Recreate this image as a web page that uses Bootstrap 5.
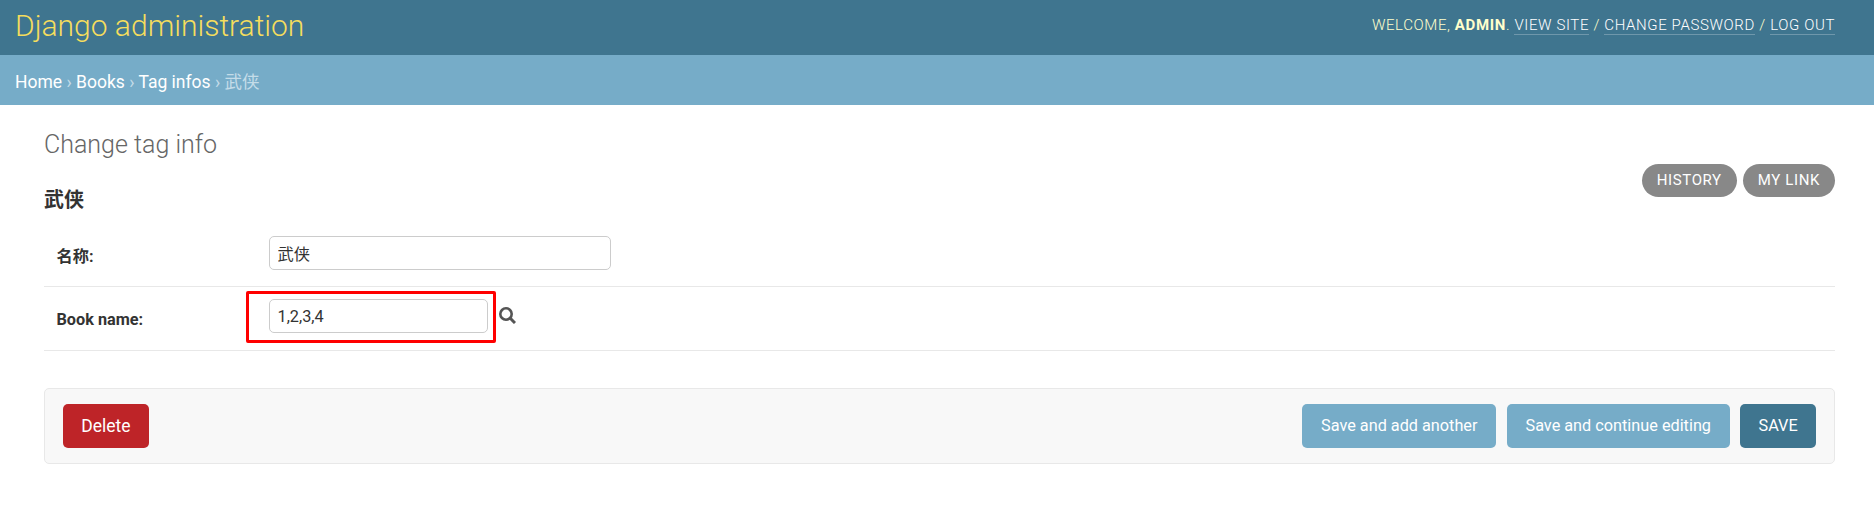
<!DOCTYPE html>
<html lang="en">
<head>
<meta charset="utf-8">
<title>Change tag info | Django site admin</title>
<link href="https://cdn.jsdelivr.net/npm/bootstrap@5.3.0/dist/css/bootstrap.min.css" rel="stylesheet">
<style>
body{font-family:Roboto,"Noto Sans CJK SC",sans-serif;font-size:16.25px;line-height:20px;color:#333;background:#fff}
.site-head{height:55px;background:#3f758f;color:#ffc;padding:0 39px 0 15px}
.site-head h1{font-size:30px;font-weight:300;line-height:36px;color:#f5dd5d;margin:8px 0 0}
.user-tools{font-size:15px;font-weight:300;letter-spacing:.625px;line-height:18px;margin-top:16px;text-transform:uppercase}
.user-tools strong{font-weight:700}
.user-tools a{color:#fff;text-decoration:none;border-bottom:1px solid rgba(255,255,255,.25)}
.crumbs{height:50px;background:#76acc8;color:#c4dce8;font-size:17.5px;padding:3px 15px 0}
.crumbs a{color:#fff;text-decoration:none}
.page-body{padding:25px 39px 0 44px}
.page-body h1{font-size:25px;font-weight:300;line-height:30px;color:#666;margin:0}
.title-row{height:82px}
.page-body h2{font-size:20px;font-weight:700;line-height:24px;margin:28px 0 0}
.tools{margin-top:34px;gap:6px}
.pill{background:#888;color:#fff;border-radius:18.75px;height:33px;font-size:15px;line-height:18px;padding:7px 15px 8px;letter-spacing:.625px;text-decoration:none;text-transform:uppercase}
.field-row{border-bottom:1px solid #e8e8e8;padding:12px 12.5px 17px}
.field-row.first-row{padding:24px 12.5px 16px}
.field-row label{width:212.5px;font-weight:700;padding-top:10.5px}
.admin-input{border:1px solid #ccc;border-radius:5px;height:34px;width:342px;padding:6px 7.5px;font-size:16.25px;color:#333;line-height:20px;background:#fff}
.raw-id{width:219px}
.lookup{margin:8px 0 0 11px}
.marker{left:-23.5px;top:-8px;width:250px;height:52px;border:3px solid #f00;border-radius:2px}
.submit-row{margin-top:37px;height:76px;background:#f8f8f8;border:1px solid #e8e8e8;border-radius:5px;padding:0 18px}
.submit-row .btn{height:44px;border:0;border-radius:5px;color:#fff;font-size:16.25px;line-height:20px;padding:11px 18.75px}
.submit-row .del{background:#be2428;font-size:17.5px;padding:11px 18.2px}
.submit-row .b-soft{background:#76acc8}
.submit-row .b-main{background:#3f758f;padding:11px 18.3px}
.save-group{gap:10.5px}
</style>
</head>
<body>
<header class="site-head d-flex justify-content-between align-items-start">
<h1>Django administration</h1>
<div class="user-tools">Welcome, <strong>admin</strong>. <a href="#">View site</a> / <a href="#">Change password</a> / <a href="#">Log out</a></div>
</header>
<nav class="crumbs d-flex align-items-center"><div><a href="#">Home</a> › <a href="#">Books</a> › <a href="#">Tag infos</a> › 武侠</div></nav>
<main class="page-body">
<div class="title-row d-flex justify-content-between">
<div><h1>Change tag info</h1><h2>武侠</h2></div>
<div class="tools d-flex align-items-start"><a class="pill" href="#">History</a><a class="pill" href="#">My link</a></div>
</div>
<form>
<div class="field-row first-row d-flex align-items-start"><label for="n">名称:</label><input id="n" class="admin-input" value="武侠"></div>
<div class="field-row d-flex align-items-start"><label for="b">Book name:</label>
<div class="position-relative d-flex align-items-start"><input id="b" class="admin-input raw-id" value="1,2,3,4"><span class="marker position-absolute"></span>
<svg class="lookup" width="17" height="17" viewBox="0 0 17 17" fill="none" stroke="#555"><circle cx="7" cy="7" r="5.7" stroke-width="2.6"/><path d="M11 11l5 5" stroke-width="3"/></svg></div></div>
<div class="submit-row d-flex align-items-center">
<button type="button" class="btn del me-auto">Delete</button>
<div class="save-group d-flex">
<button type="button" class="btn b-soft">Save and add another</button>
<button type="button" class="btn b-soft">Save and continue editing</button>
<button type="button" class="btn b-main">SAVE</button>
</div>
</div>
</form>
</main>
<script src="https://cdn.jsdelivr.net/npm/bootstrap@5.3.0/dist/js/bootstrap.bundle.min.js"></script>
</body>
</html>
